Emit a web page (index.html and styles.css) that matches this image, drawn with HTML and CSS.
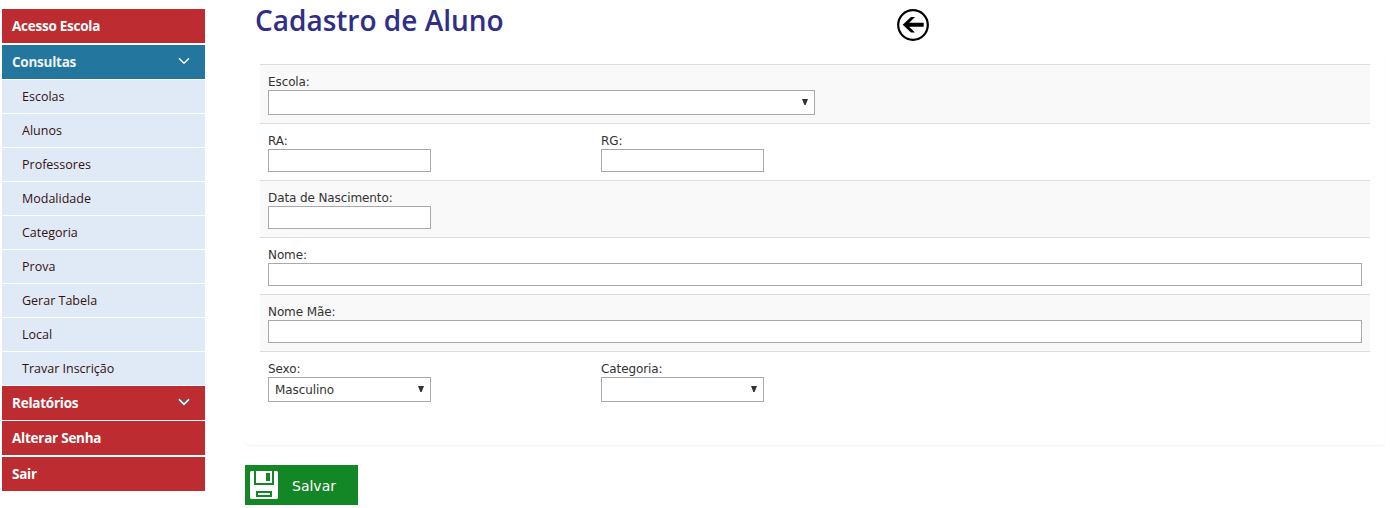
FILE: index.html
```html
<!DOCTYPE html>
<html lang="pt-BR">
<head>
<meta charset="utf-8">
<title>Cadastro de Aluno</title>
<link rel="stylesheet" href="styles.css">
</head>
<body>
<div class="page">
  <nav class="menu">
    <a class="menu-item gap"><span>Acesso Escola</span></a>
    <a class="menu-item active"><span>Consultas</span>
      <svg class="chevron" width="12" height="8" viewBox="0 0 12 8"><path d="M1 1.2 6 6.2 11 1.2" fill="none" stroke="#fff" stroke-width="1.4"/></svg></a>
    <div class="submenu">
      <a class="sub-item">Escolas</a>
      <a class="sub-item">Alunos</a>
      <a class="sub-item">Professores</a>
      <a class="sub-item">Modalidade</a>
      <a class="sub-item">Categoria</a>
      <a class="sub-item">Prova</a>
      <a class="sub-item">Gerar Tabela</a>
      <a class="sub-item">Local</a>
      <a class="sub-item">Travar Inscrição</a>
    </div>
    <a class="menu-item"><span>Relatórios</span>
      <svg class="chevron" width="12" height="8" viewBox="0 0 12 8"><path d="M1 1.2 6 6.2 11 1.2" fill="none" stroke="#4a6f86" stroke-width="2.8"/><path d="M1 1.2 6 6.2 11 1.2" fill="none" stroke="#fff" stroke-width="1.4"/></svg></a>
    <a class="menu-item gap"><span>Alterar Senha</span></a>
    <a class="menu-item"><span>Sair</span></a>
  </nav>
  <main class="content">
    <header class="heading">
      <h1 class="title">Cadastro de Aluno</h1>
      <svg class="back" width="32" height="32" viewBox="0 0 32 32"><circle cx="16" cy="16" r="14.8" fill="#fff" stroke="#000" stroke-width="2.2"/><path d="M5.7 15.7 14 8h4l-5.8 5.7h14.5v4H12.2L18 23.6h-4z"/></svg>
    </header>
    <section class="card">
      <div class="row shaded">
        <label class="field wide">Escola:<span class="select"><svg class="arrow" width="6" height="6" viewBox="0 0 6 6"><path d="M0 0h6L3.6 6H2.4z"/></svg></span></label>
      </div>
      <div class="row">
        <label class="field">RA:<input class="input" type="text"></label>
        <label class="field">RG:<input class="input" type="text"></label>
      </div>
      <div class="row shaded">
        <label class="field">Data de Nascimento:<input class="input" type="text"></label>
      </div>
      <div class="row">
        <label class="field full">Nome:<input class="input" type="text"></label>
      </div>
      <div class="row shaded">
        <label class="field full">Nome Mãe:<input class="input" type="text"></label>
      </div>
      <div class="row">
        <label class="field">Sexo:<span class="select">Masculino<svg class="arrow" width="6" height="6" viewBox="0 0 6 6"><path d="M0 0h6L3.6 6H2.4z"/></svg></span></label>
        <label class="field">Categoria:<span class="select"><svg class="arrow" width="6" height="6" viewBox="0 0 6 6"><path d="M0 0h6L3.6 6H2.4z"/></svg></span></label>
      </div>
    </section>
    <button class="save">
      <svg width="28" height="28" viewBox="0 0 28 28"><path d="M1 0h26l1 1v26l-1 1H1l-1-1V1z" fill="#fff"/><path d="M5 0v13h18V0M7 21h14v4H7z" fill="none" stroke="#138626" stroke-width="2"/><path d="M16 2h4v8h-4z" fill="#138626"/></svg>
      <span class="save-text">Salvar</span>
    </button>
  </main>
</div>
</body>
</html>
```
FILE: styles.css
```css
* { box-sizing: border-box; }
body {
  margin: 0;
  background: #fff;
  color: #333;
  font: 12px/15px "DejaVu Sans", sans-serif;
}
.page { display: flex; height: 508px; overflow: hidden; }
.menu {
  width: 203px;
  margin: 9px 40px 0 2px;
  flex: none;
  font-family: "Open Sans", sans-serif;
}
.menu-item {
  display: flex;
  align-items: center;
  justify-content: space-between;
  height: 34px;
  margin-bottom: 1px;
  padding: 0 15px 0 10px;
  background: #bd2c30;
  color: #fff;
  font-size: 13.5px;
  font-weight: 700;
  letter-spacing: -0.25px;
}
.menu-item.gap { margin-bottom: 2px; }
.menu-item.active { background: #23769e; color: #edf3f6; }
.chevron { margin-bottom: 3px; overflow: visible; }
.sub-item {
  display: block;
  height: 34px;
  padding-left: 20px;
  border-bottom: 1px solid #fff;
  background: #e0eaf6;
  color: #331111;
  font-size: 12.5px;
  line-height: 34px;
}
.content { width: 1140px; flex: none; }
.heading { display: flex; height: 50px; padding: 9px 0 0 10px; }
.title {
  width: 642px;
  margin: -9px 0 0;
  color: #302e87;
  font: 600 28px/40px "Open Sans", sans-serif;
}
.card {
  height: 395px;
  padding: 14px 15px 0;
  border-radius: 4px;
  box-shadow: 0 1px 2px rgba(0, 0, 0, .05);
}
.row {
  display: flex;
  gap: 170px;
  padding: 10px 8px 8px;
  border-top: 1px solid #ddd;
}
.shaded { background: #f9f9f9; }
.field { display: block; width: 163px; letter-spacing: -0.1px; white-space: nowrap; }
.field.wide { width: 547px; }
.field.full { width: 100%; }
.input {
  display: block;
  width: 100%;
  height: 23px;
  margin: 0;
  padding: 0 6px;
  border: 1px solid #a9a9a9;
  background: #fff;
}
.select {
  display: flex;
  align-items: center;
  height: 25px;
  padding: 2px 6px 0;
  border: 1px solid #a9a9a9;
  background: #fff;
}
.arrow { align-self: flex-start; margin: 6px 0 0 auto; fill: #333; }
.save {
  display: flex;
  align-items: center;
  gap: 14px;
  width: 113px;
  height: 40px;
  margin: 20px 0 0;
  padding: 0 5px;
  border: 0;
  background: #138626;
  color: #fff;
}
.save-text { padding-top: 2px; font: 14px/20px "DejaVu Sans", sans-serif; }
```
